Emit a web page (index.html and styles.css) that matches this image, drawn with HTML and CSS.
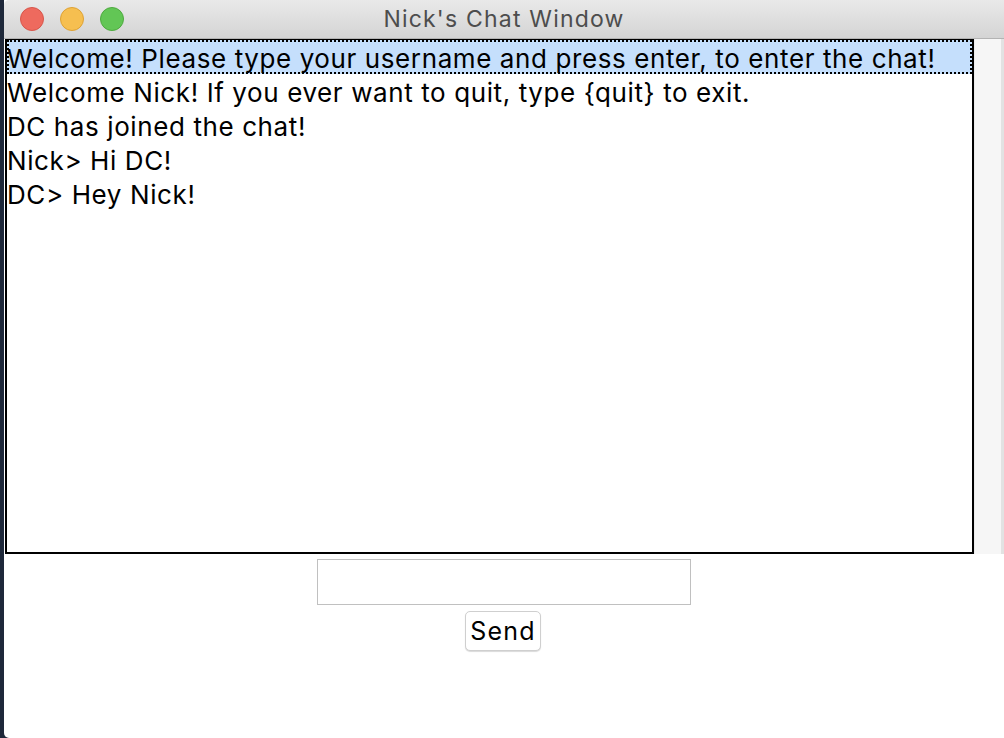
FILE: index.html
```html
<!DOCTYPE html>
<html>
<head>
<meta charset="utf-8">
<link rel="stylesheet" href="styles.css">
</head>
<body>
<div class="window">
  <div class="titlebar">
    <div class="lights">
      <span class="light red"></span>
      <span class="light yellow"></span>
      <span class="light green"></span>
    </div>
    <div class="title">Nick's Chat Window</div>
  </div>
  <div class="content">
    <div class="top">
      <div class="list">
        <div class="row selected">Welcome! Please type your username and press enter, to enter the chat!</div>
        <div class="row">Welcome Nick! If you ever want to quit, type {quit} to exit.</div>
        <div class="row">DC has joined the chat!</div>
        <div class="row">Nick&gt; Hi DC!</div>
        <div class="row">DC&gt; Hey Nick!</div>
      </div>
      <div class="side"></div>
    </div>
    <div class="controls">
      <input class="entry" type="text">
      <button class="send">Send</button>
    </div>
  </div>
</div>
</body>
</html>
```
FILE: styles.css
```css
html, body {
  margin: 0;
  padding: 0;
  height: 100%;
}
body {
  background: #1e283a;
  font-family: Inter, "Liberation Sans", Arial, sans-serif;
  overflow: hidden;
}
.window {
  margin-left: 4px;
  height: 738px;
  background: #ffffff;
  display: flex;
  flex-direction: column;
  border-bottom-left-radius: 5px;
}
.titlebar {
  height: 38px;
  background: linear-gradient(#e9e9e9, #d4d4d4);
  border-bottom: 1px solid #b3b3b3;
  display: flex;
  align-items: center;
  position: relative;
  border-top-left-radius: 5px;
}
.lights {
  display: flex;
  gap: 16px;
  padding-left: 16px;
}
.light {
  width: 24px;
  height: 24px;
  border-radius: 50%;
  box-sizing: border-box;
}
.red { background: #ee6a5e; border: 1px solid #d7564b; }
.yellow { background: #f6bf50; border: 1px solid #dea234; }
.green { background: #62c655; border: 1px solid #4eaa3f; }
.title {
  position: absolute;
  left: 0;
  right: 0;
  top: 0;
  height: 38px;
  line-height: 38px;
  text-align: center;
  font-size: 23px;
  letter-spacing: 1.2px;
  color: #4d4d4d;
  pointer-events: none;
}
.content {
  flex: 1;
  display: flex;
  flex-direction: column;
}
.top {
  display: flex;
  height: 515px;
}
.list {
  width: 969px;
  margin-left: 1px;
  border: 2px solid #000;
  border-top-width: 1px;
  box-sizing: border-box;
  background: #fff;
}
.row {
  height: 34px;
  line-height: 37px;
  font-size: 26px;
  letter-spacing: 0.6px;
  color: #000;
  padding-left: 0;
  white-space: nowrap;
  box-sizing: border-box;
}
.row.selected {
  background: #c5dffc;
  outline: 2px dotted #000;
  outline-offset: -2px;
}
.side {
  flex: 1;
  background: #f6f6f6;
  border-left: 1px solid #ececec;
  border-right: 3px solid #e2e2e2;
}
.controls {
  display: flex;
  flex-direction: column;
  align-items: center;
  padding-top: 5px;
  gap: 6px;
}
.entry {
  width: 374px;
  height: 46px;
  box-sizing: border-box;
  border: 1px solid #c0c0c0;
  margin: 0;
  padding: 0 6px;
  font-size: 22px;
  font-family: Inter, "Liberation Sans", Arial, sans-serif;
  outline: none;
}
.send {
  width: 76px;
  height: 40px;
  box-sizing: border-box;
  border: 1px solid #cfcfcf;
  border-radius: 5px;
  background: #fff;
  box-shadow: 0 1px 1px rgba(0,0,0,0.15);
  font-size: 25px;
  letter-spacing: 1.2px;
  font-family: Inter, "Liberation Sans", Arial, sans-serif;
  color: #000;
  padding: 0;
  margin-left: -2px;
}
```
